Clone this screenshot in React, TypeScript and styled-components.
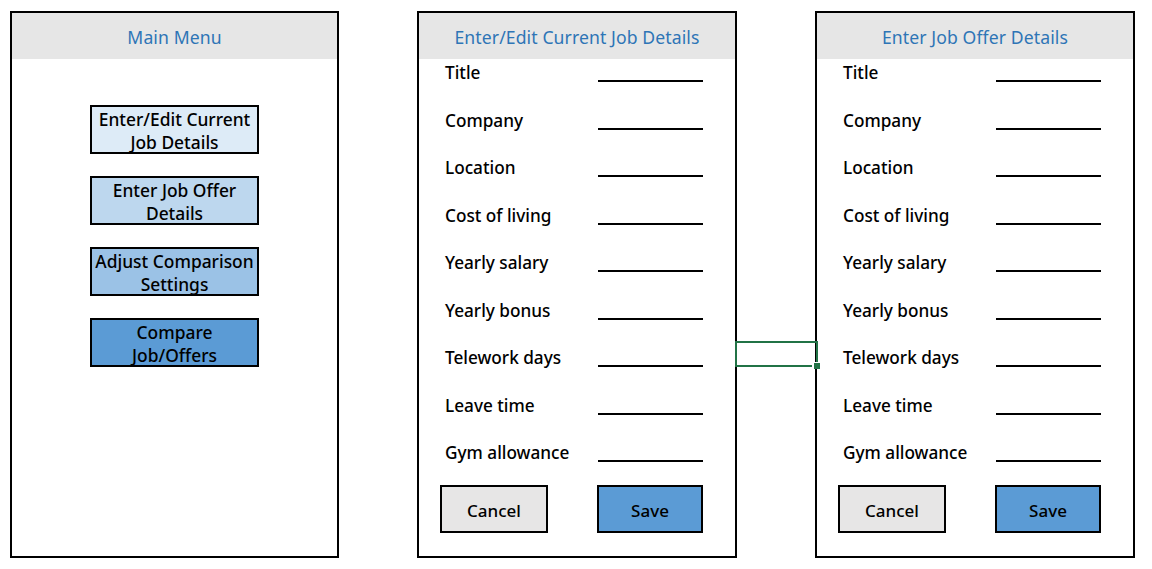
import * as React from 'react'
import styled, { createGlobalStyle } from 'styled-components'

const GlobalStyle = createGlobalStyle`
	html, body {
		margin: 0;
		padding: 0;
		background: #ffffff;
	}
	body {
		font-family: 'Noto Sans', 'Open Sans', Arial, sans-serif;
		color: #000000;
	}
`

const MENU_ITEMS = [
	{ label: 'Enter/Edit Current Job Details', lines: ['Enter/Edit Current', 'Job Details'], color: '#ddebf7' },
	{ label: 'Enter Job Offer Details', lines: ['Enter Job Offer', 'Details'], color: '#bdd7ee' },
	{ label: 'Adjust Comparison Settings', lines: ['Adjust Comparison', 'Settings'], color: '#9bc2e6' },
	{ label: 'Compare Job/Offers', lines: ['Compare', 'Job/Offers'], color: '#5b9bd5' }
]

const FIELDS = [
	'Title',
	'Company',
	'Location',
	'Cost of living',
	'Yearly salary',
	'Yearly bonus',
	'Telework days',
	'Leave time',
	'Gym allowance'
]

export default function App() {
	return (
		<>
			<GlobalStyle />
			<Page>
				<Panel $width={329}>
					<Header>Main Menu</Header>
					<MenuList>
						{MENU_ITEMS.map((item) => (
							<MenuButton key={item.label} $bg={item.color}>
								{item.lines.map((line) => (
									<span key={line}>{line}</span>
								))}
							</MenuButton>
						))}
					</MenuList>
				</Panel>
				<DetailsForm title="Enter/Edit Current Job Details" />
				<DetailsForm title="Enter Job Offer Details" />
				<CellSelection>
					<FillHandle />
				</CellSelection>
			</Page>
		</>
	)
}

const DetailsForm = (props: { title: string }) => {
	return (
		<Panel $width={320}>
			<Header>{props.title}</Header>
			<Fields>
				{FIELDS.map((field) => (
					<FieldRow key={field}>
						<FieldLabel>{field}</FieldLabel>
						<Blank />
					</FieldRow>
				))}
			</Fields>
			<Actions>
				<ActionButton $bg="#e7e6e6">Cancel</ActionButton>
				<ActionButton $bg="#5b9bd5">Save</ActionButton>
			</Actions>
		</Panel>
	)
}

const Page = styled.div`
	position: relative;
	display: flex;
	align-items: flex-start;
	gap: 78px;
	padding: 11px 0 0 10px;
	width: 1152px;
	height: 569px;
	box-sizing: border-box;
`

const Panel = styled.section<{ $width: number }>`
	display: flex;
	flex-direction: column;
	width: ${(p) => p.$width}px;
	height: 547px;
	border: 2px solid #000000;
	box-sizing: border-box;
	background: #ffffff;
`

const Header = styled.h1`
	margin: 0;
	height: 46px;
	padding-top: 2px;
	box-sizing: border-box;
	display: flex;
	align-items: center;
	justify-content: center;
	background: #e6e6e6;
	color: #2e75b6;
	font-size: 17.6px;
	font-weight: 400;
	letter-spacing: 0.1px;
`

const MenuList = styled.div`
	display: flex;
	flex-direction: column;
	align-items: center;
	gap: 22px;
	padding-top: 46px;
`

const MenuButton = styled.button<{ $bg: string }>`
	display: flex;
	flex-direction: column;
	align-items: center;
	justify-content: center;
	width: 169px;
	height: 49px;
	padding: 2px 0 0;
	border: 2px solid #000000;
	box-sizing: border-box;
	background: ${(p) => p.$bg};
	font-family: inherit;
	font-size: 17.4px;
	font-weight: 500;
	line-height: 23px;
	color: #000000;
`

const Fields = styled.div`
	display: flex;
	flex-direction: column;
	padding: 0 32px 0 26px;
`

const FieldRow = styled.div`
	display: flex;
	justify-content: space-between;
	height: 47.5px;
`

const FieldLabel = styled.span`
	font-size: 17.2px;
	font-weight: 500;
	line-height: 24px;
	padding-top: 2px;
`

const Blank = styled.div`
	width: 105px;
	height: 2px;
	margin-top: 21px;
	background: #000000;
`

const Actions = styled.div`
	display: flex;
	justify-content: space-between;
	padding: 0 32px 0 21px;
	margin-top: -2px;
`

const ActionButton = styled.button<{ $bg: string }>`
	width: 108px;
	height: 48px;
	padding: 3px 0 0;
	border: 2px solid #000000;
	box-sizing: border-box;
	background: ${(p) => p.$bg};
	font-family: inherit;
	font-size: 17px;
	font-weight: 500;
	color: #000000;

	& + & {
		width: 106px;
	}
`

const CellSelection = styled.div`
	position: absolute;
	left: 735px;
	top: 341px;
	width: 83px;
	height: 26px;
	border: 2px solid #217346;
	box-sizing: border-box;
`

const FillHandle = styled.div`
	position: absolute;
	right: -4px;
	bottom: -4px;
	width: 6px;
	height: 6px;
	background: #217346;
	border-left: 2px solid #ffffff;
	border-top: 1px solid #ffffff;
`
